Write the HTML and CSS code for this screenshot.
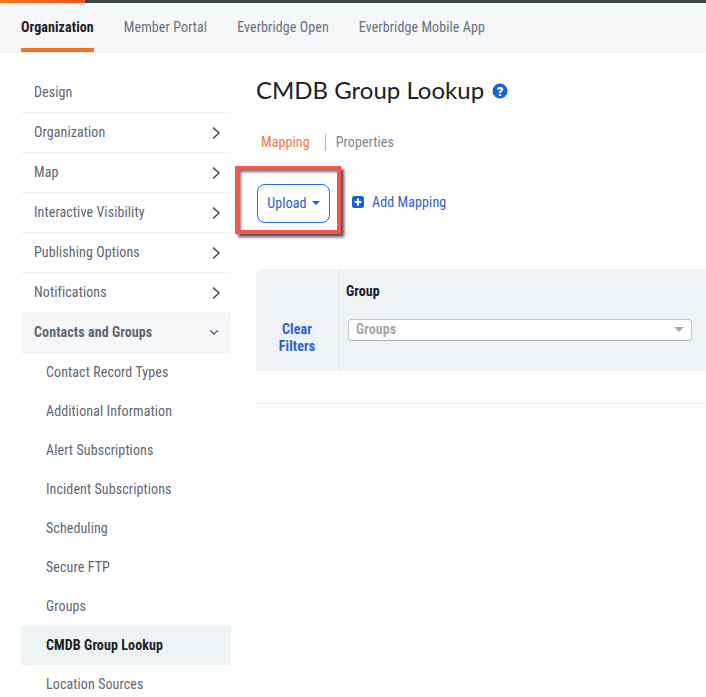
FILE: index.html
```html
<!DOCTYPE html>
<html lang="en">
<head>
<meta charset="utf-8">
<title>CMDB Group Lookup</title>
<link rel="stylesheet" href="styles.css">
</head>
<body>
<div class="topbar"><div class="topbar-accent"></div></div>
<nav class="tabs">
  <a class="tab tab-active">Organization</a>
  <a class="tab">Member Portal</a>
  <a class="tab">Everbridge Open</a>
  <a class="tab">Everbridge Mobile App</a>
</nav>
<div class="layout">
  <aside class="sidebar">
    <div class="item">Design</div>
    <div class="item">Organization<svg class="chev" viewBox="0 0 10 14"><path d="M2 1.5 8 7l-6 5.5"/></svg></div>
    <div class="item">Map<svg class="chev" viewBox="0 0 10 14"><path d="M2 1.5 8 7l-6 5.5"/></svg></div>
    <div class="item">Interactive Visibility<svg class="chev" viewBox="0 0 10 14"><path d="M2 1.5 8 7l-6 5.5"/></svg></div>
    <div class="item">Publishing Options<svg class="chev" viewBox="0 0 10 14"><path d="M2 1.5 8 7l-6 5.5"/></svg></div>
    <div class="item">Notifications<svg class="chev" viewBox="0 0 10 14"><path d="M2 1.5 8 7l-6 5.5"/></svg></div>
    <div class="item item-open">Contacts and Groups<svg class="chev-down" viewBox="0 0 12 8"><path d="M1.5 1.5 6 6l4.5-4.5"/></svg></div>
    <div class="sub">Contact Record Types</div>
    <div class="sub">Additional Information</div>
    <div class="sub">Alert Subscriptions</div>
    <div class="sub">Incident Subscriptions</div>
    <div class="sub">Scheduling</div>
    <div class="sub">Secure FTP</div>
    <div class="sub">Groups</div>
    <div class="sub sub-active">CMDB Group Lookup</div>
    <div class="sub">Location Sources</div>
  </aside>
  <main class="content">
    <h1 class="title">CMDB Group Lookup
      <svg class="help" viewBox="0 0 16 16"><circle cx="8" cy="8" r="7.5" fill="#1463d8"/><text x="8" y="12.6" text-anchor="middle" class="help-mark">?</text></svg>
    </h1>
    <div class="subtabs">
      <span class="subtab subtab-active">Mapping</span>
      <span class="subtab">Properties</span>
    </div>
    <div class="actions">
      <button class="upload">Upload<span class="caret"></span></button>
      <a class="add">
        <svg class="plus" viewBox="0 0 12 12"><rect width="12" height="12" rx="2.5" fill="#1463d8"/><path d="M6 2.6v6.8M2.6 6h6.8" stroke="#fff" stroke-width="2"/></svg>
        Add Mapping
      </a>
      <div class="highlight"></div>
    </div>
    <section class="filters">
      <div class="filters-left">
        <div class="corner-cell"></div>
        <div class="clear-cell"><a class="clear">Clear<br>Filters</a></div>
      </div>
      <div class="filters-main">
        <div class="col-label">Group</div>
        <div class="select">Groups<span class="select-caret"></span></div>
      </div>
    </section>
    <div class="rule"></div>
  </main>
</div>
</body>
</html>
```
FILE: styles.css
```css
* { box-sizing: border-box; }
html, body { margin: 0; height: 697px; overflow: hidden; background: #fff; }
body { font-family: "Roboto Condensed", Roboto, "Liberation Sans", sans-serif; font-size: 14px; letter-spacing: 0.1px; color: #5f6672; }

.topbar { height: 3px; background: #3f4444; }
.topbar-accent { width: 85px; height: 3px; background: linear-gradient(90deg, #f47a20, #ee4f24); }

.tabs { height: 50px; padding-left: 21px; display: flex; gap: 30px; background: #f5f7f9; border-bottom: 1px solid #eef2f5; }
.tab { height: 49px; line-height: 48px; color: #6a7080; }
.tab-active { color: #1d2026; font-weight: 700; border-bottom: 4px solid #f47321; }

.layout { display: flex; padding-left: 21px; }
.sidebar { width: 210px; flex: none; padding-top: 20px; }
.item { height: 40px; padding: 0 11px 1px 13px; display: flex; align-items: center; justify-content: space-between; border-bottom: 1px solid #eef3f6; color: #5f6672; }
.item-open { background: #f5f7f9; font-weight: 700; }
.chev { width: 10px; height: 14px; margin: 2px -1px 0 0; fill: none; stroke: #3f4450; stroke-width: 1.4; }
.chev-down { width: 10px; height: 7px; margin-right: 1px; fill: none; stroke: #3f4450; stroke-width: 1.4; }
.sub { height: 39px; padding: 0 0 1px 25px; display: flex; align-items: center; }
.sub-active { background: #eef3f6; color: #1d2026; font-weight: 700; }

.content { flex: 1; min-width: 0; padding-left: 25px; }
.title { margin: 0; padding-top: 18px; height: 55px; font: 400 24px/32px Lato, sans-serif; letter-spacing: 0; color: #1d2026; display: flex; align-items: center; gap: 8px; white-space: nowrap; }
.help { width: 16px; height: 16px; margin-top: 3px; }
.help-mark { font: 900 13px Roboto, sans-serif; letter-spacing: 0; fill: #fff; }

.subtabs { margin-top: 26px; display: flex; height: 17px; align-items: center; padding-left: 5px; }
.subtab { color: #7d8794; line-height: 17px; }
.subtab-active { color: #f47a3c; padding-right: 15px; margin-right: 10px; border-right: 1px solid #a9b2ba; }

.actions { position: relative; margin-top: 33px; height: 39px; padding-left: 1px; display: flex; align-items: center; gap: 22px; }
.upload { width: 73px; height: 39px; border: 1px solid #1a6ae0; border-radius: 8px; background: #fff; color: #1f62d0; font: inherit; letter-spacing: inherit; display: flex; align-items: center; justify-content: center; gap: 5px; padding: 0 0 1px; }
.caret { width: 0; height: 0; border-left: 4px solid transparent; border-right: 4px solid transparent; border-top: 4px solid #1463d8; }
.add { display: flex; align-items: center; gap: 8px; color: #2f5fd0; margin-top: -4px; }
.plus { width: 12px; height: 12px; }
.highlight { position: absolute; left: -21px; top: -18px; width: 106px; height: 68px; border: 4px solid #f4574c; box-shadow: 3px 3px 3px rgba(0,0,0,.7), inset 2px 2px 3px rgba(0,0,0,.55); pointer-events: none; }

.filters { margin-top: 46px; height: 102px; display: flex; }
.filters-left { width: 84px; flex: none; display: flex; flex-direction: column; border-right: 1px solid #e0e5e8; text-align: center; }
.corner-cell { height: 44px; background: #eef3f6; border-top-left-radius: 8px; }
.clear-cell { flex: 1; background: #eef3f6; border-top-left-radius: 4px; padding: 8px 1px 0 0; }
.clear { color: #2b62d6; font-weight: 700; line-height: 17px; display: block; }
.filters-main { flex: 1; min-width: 0; padding: 14px 14px 0 8px; background: #eef3f6; }
.col-label { color: #1d2026; font-weight: 700; line-height: 16px; margin-left: -2px; }
.select { margin-top: 20px; height: 22px; border: 1px solid #c4c7c9; border-bottom-color: #aeb1b3; border-radius: 4px; background: #fff; color: #a6a9ac; font-weight: 700; line-height: 18px; padding: 0 7px; position: relative; }
.select-caret { position: absolute; right: 7px; top: 7px; width: 0; height: 0; border-left: 5px solid transparent; border-right: 5px solid transparent; border-top: 5px solid #a6a9ac; }
.rule { margin-top: 32px; height: 1px; background: #eef0f2; }
```
